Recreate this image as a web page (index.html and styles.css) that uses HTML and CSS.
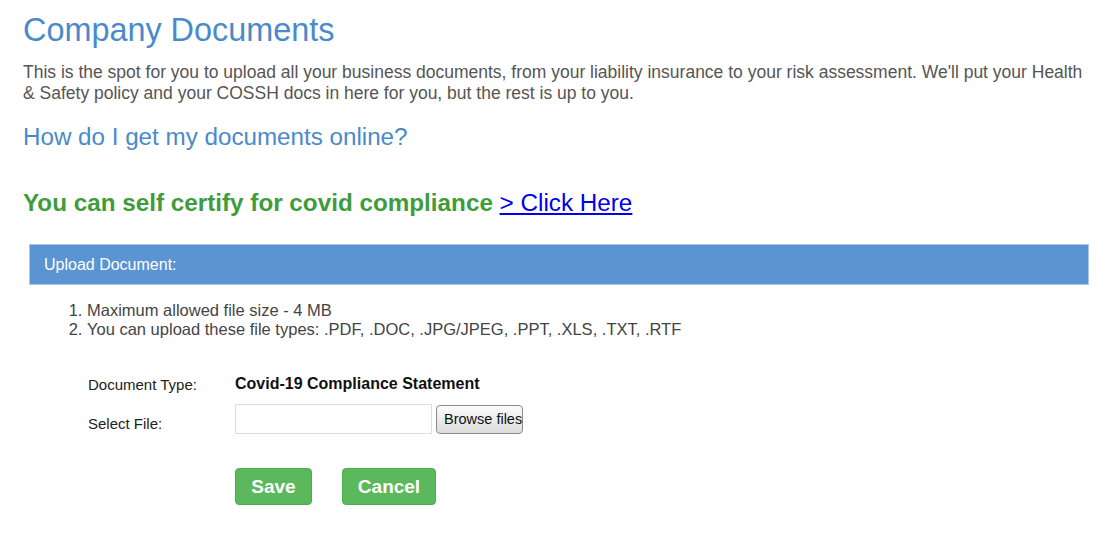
FILE: index.html
```html
<!DOCTYPE html>
<html lang="en">
<head>
<meta charset="utf-8">
<title>Company Documents</title>
<link rel="stylesheet" href="styles.css">
</head>
<body>
<div class="page">
  <h1 class="title">Company Documents</h1>
  <p class="intro">This is the spot for you to upload all your business documents, from your liability insurance to your risk assessment. We'll put your Health &amp; Safety policy and your COSSH docs in here for you, but the rest is up to you.</p>
  <h2 class="howto">How do I get my documents online?</h2>
  <h2 class="covid">You can self certify for covid compliance <a href="#" class="click">&gt; Click Here</a></h2>
  <div class="panel">
    <div class="panel-head">Upload Document:</div>
    <ol class="rules">
      <li>Maximum allowed file size - 4 MB</li>
      <li>You can upload these file types: .PDF, .DOC, .JPG/JPEG, .PPT, .XLS, .TXT, .RTF</li>
    </ol>
    <div class="form">
      <div class="row">
        <div class="label">Document Type:</div>
        <div class="value">Covid-19 Compliance Statement</div>
      </div>
      <div class="row row-file">
        <div class="label label-file">Select File:</div>
        <div class="file">
          <div class="file-box"></div>
          <div class="browse"><span>Browse files</span></div>
        </div>
      </div>
      <div class="actions">
        <button class="btn btn-save">Save</button>
        <button class="btn btn-cancel">Cancel</button>
      </div>
    </div>
  </div>
</div>
</body>
</html>
```
FILE: styles.css
```css
html, body {
  margin: 0;
  padding: 0;
  background: #ffffff;
}
body {
  font-family: "Liberation Sans", Arial, sans-serif;
  color: #555555;
}
.page {
  padding: 12px 0 0 23px;
}
.title {
  margin: 0;
  font-size: 32.4px;
  font-weight: normal;
  line-height: 36px;
  color: #4a8acb;
}
.intro {
  margin: 14px 0 0 0;
  width: 1066px;
  font-size: 17.5px;
  line-height: 21px;
  color: #555555;
}
.howto {
  margin: 18px 0 0 0;
  font-size: 24.2px;
  font-weight: normal;
  line-height: 30px;
  color: #4a8acb;
}
.covid {
  margin: 36px 0 0 0;
  font-size: 24.25px;
  font-weight: bold;
  line-height: 30px;
  color: #3f9c3a;
}
.click {
  font-weight: normal;
  color: #0000ee;
  text-decoration: underline;
}
.panel {
  margin: 26px 0 0 6px;
  width: 1060px;
}
.panel-head {
  box-sizing: border-box;
  height: 41px;
  padding: 0 14px;
  display: flex;
  align-items: center;
  background: #5a94d2;
  border: 1px solid #a9c7ea;
  color: #ffffff;
  font-size: 16px;
}
.rules {
  margin: 16px 0 0 0;
  padding-left: 58px;
  font-size: 16.5px;
  line-height: 19px;
  color: #444444;
}
.form {
  margin-top: 36px;
  padding-left: 59px;
}
.row {
  display: flex;
  align-items: center;
}
.label {
  width: 147px;
  font-size: 15px;
  line-height: 17px;
  color: #222222;
}
.value {
  font-size: 16px;
  font-weight: bold;
  color: #111111;
}
.row-file {
  margin-top: 11px;
  align-items: flex-start;
}
.label-file {
  padding-top: 11px;
}
.file {
  display: flex;
  align-items: center;
  gap: 4px;
}
.file-box {
  box-sizing: border-box;
  width: 197px;
  height: 30px;
  border: 1px solid #dadde2;
  background: #ffffff;
}
.browse {
  box-sizing: border-box;
  width: 87px;
  height: 29px;
  border: 1px solid #8a8a8a;
  border-radius: 4px;
  background: linear-gradient(#fbfbfb, #dcdcdc);
  overflow: hidden;
  display: flex;
  align-items: center;
  padding-left: 7px;
  font-size: 14.5px;
  color: #111111;
  white-space: nowrap;
}
.actions {
  margin-top: 34px;
  margin-left: 147px;
  display: flex;
  gap: 30px;
}
.btn {
  height: 37px;
  border: 1px solid #4cae4c;
  border-radius: 4px;
  background: #5cb85c;
  color: #ffffff;
  font-family: "Liberation Sans", Arial, sans-serif;
  font-size: 19px;
  font-weight: bold;
  padding: 0;
}
.btn-save {
  width: 77px;
}
.btn-cancel {
  width: 94px;
}
```
